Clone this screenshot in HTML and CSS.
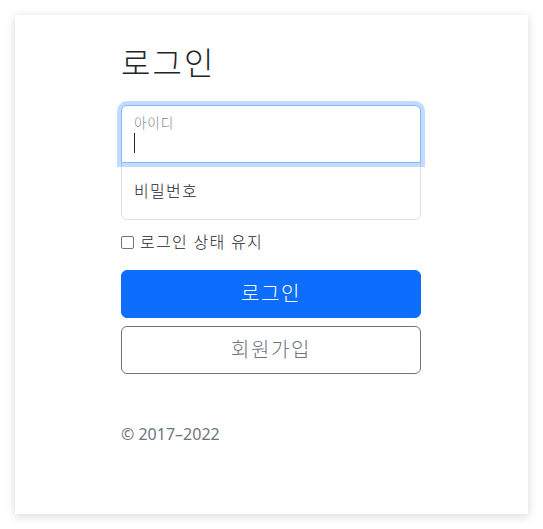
FILE: index.html
```html
<!DOCTYPE html>
<html lang="ko">
<head>
<meta charset="utf-8">
<title>로그인</title>
<link rel="stylesheet" href="styles.css">
</head>
<body>
<div class="card">
  <main class="signin">
    <h1 class="title">로그인</h1>
    <div class="field field-top focused">
      <label class="float-label">아이디</label>
      <span class="caret"></span>
    </div>
    <div class="field field-bottom">
      <label class="plain-label">비밀번호</label>
    </div>
    <label class="remember"><span class="check"></span><span class="ko">로그인 상태 유지</span></label>
    <button class="btn btn-primary" type="button"><span class="ko">로그인</span></button>
    <button class="btn btn-outline" type="button"><span class="ko">회원가입</span></button>
    <p class="footer">© 2017–2022</p>
  </main>
</div>
</body>
</html>
```

FILE: styles.css
```css
* { box-sizing: border-box; }
html, body { margin: 0; padding: 0; background: #ffffff; }
body {
  font-family: "Noto Sans", "Noto Sans CJK KR", sans-serif;
  color: #212529;
  font-size: 16px;
  line-height: 24px;
  padding: 15px;
}
.card {
  width: 513px;
  height: 499px;
  background: #fff;
  box-shadow: 0 2px 9px rgba(0, 0, 0, 0.16);
  display: flex;
  justify-content: flex-start;
  padding: 30px 0 0 106px;
}
.signin {
  width: 300px;
  display: flex;
  flex-direction: column;
}
.ko {
  letter-spacing: 0.08em;
  font-weight: 300;
}
.title {
  margin: 0 0 24px;
  font-size: 32px;
  line-height: 36px;
  font-weight: 300;
  letter-spacing: 2px;
  color: #212529;
}
.field {
  position: relative;
  height: 58px;
  border: 1px solid #dee2e6;
  background: #fff;
}
.field-top {
  border-radius: 6px 6px 0 0;
  margin-bottom: -1px;
  z-index: 1;
}
.field-top.focused {
  border-color: #86b7fe;
  box-shadow: 0 0 0 4px rgba(13, 110, 253, 0.25);
}
.field-bottom {
  border-radius: 0 0 6px 6px;
}
.float-label {
  position: absolute;
  left: 12px;
  top: 7px;
  font-size: 13.6px;
  line-height: 20px;
  font-weight: 300;
  letter-spacing: 0.06em;
  color: rgba(33, 37, 41, 0.6);
}
.caret {
  position: absolute;
  left: 12px;
  top: 27px;
  width: 1px;
  height: 20px;
  background: #212529;
}
.plain-label {
  position: absolute;
  left: 12px;
  top: 16px;
  font-size: 16px;
  line-height: 24px;
  font-weight: 300;
  letter-spacing: 0.08em;
  color: #212529;
}
.remember {
  display: flex;
  align-items: center;
  margin: 10px 0 16px;
  font-size: 16px;
  line-height: 24px;
}
.check {
  width: 13px;
  height: 13px;
  border: 1px solid #767676;
  border-radius: 2px;
  margin-right: 6px;
  background: #fff;
}
.btn {
  font-family: inherit;
  height: 48px;
  width: 100%;
  font-size: 20px;
  line-height: 30px;
  border-radius: 6px;
  cursor: pointer;
}
.btn-primary {
  background: #0d6efd;
  border: 1px solid #0d6efd;
  color: #fff;
}
.btn-outline {
  margin-top: 8px;
  background: #fff;
  border: 1px solid #6c757d;
  color: #6c757d;
}
.footer {
  margin: 48px 0 0;
  color: #6c757d;
  font-size: 16px;
  line-height: 24px;
}
```
